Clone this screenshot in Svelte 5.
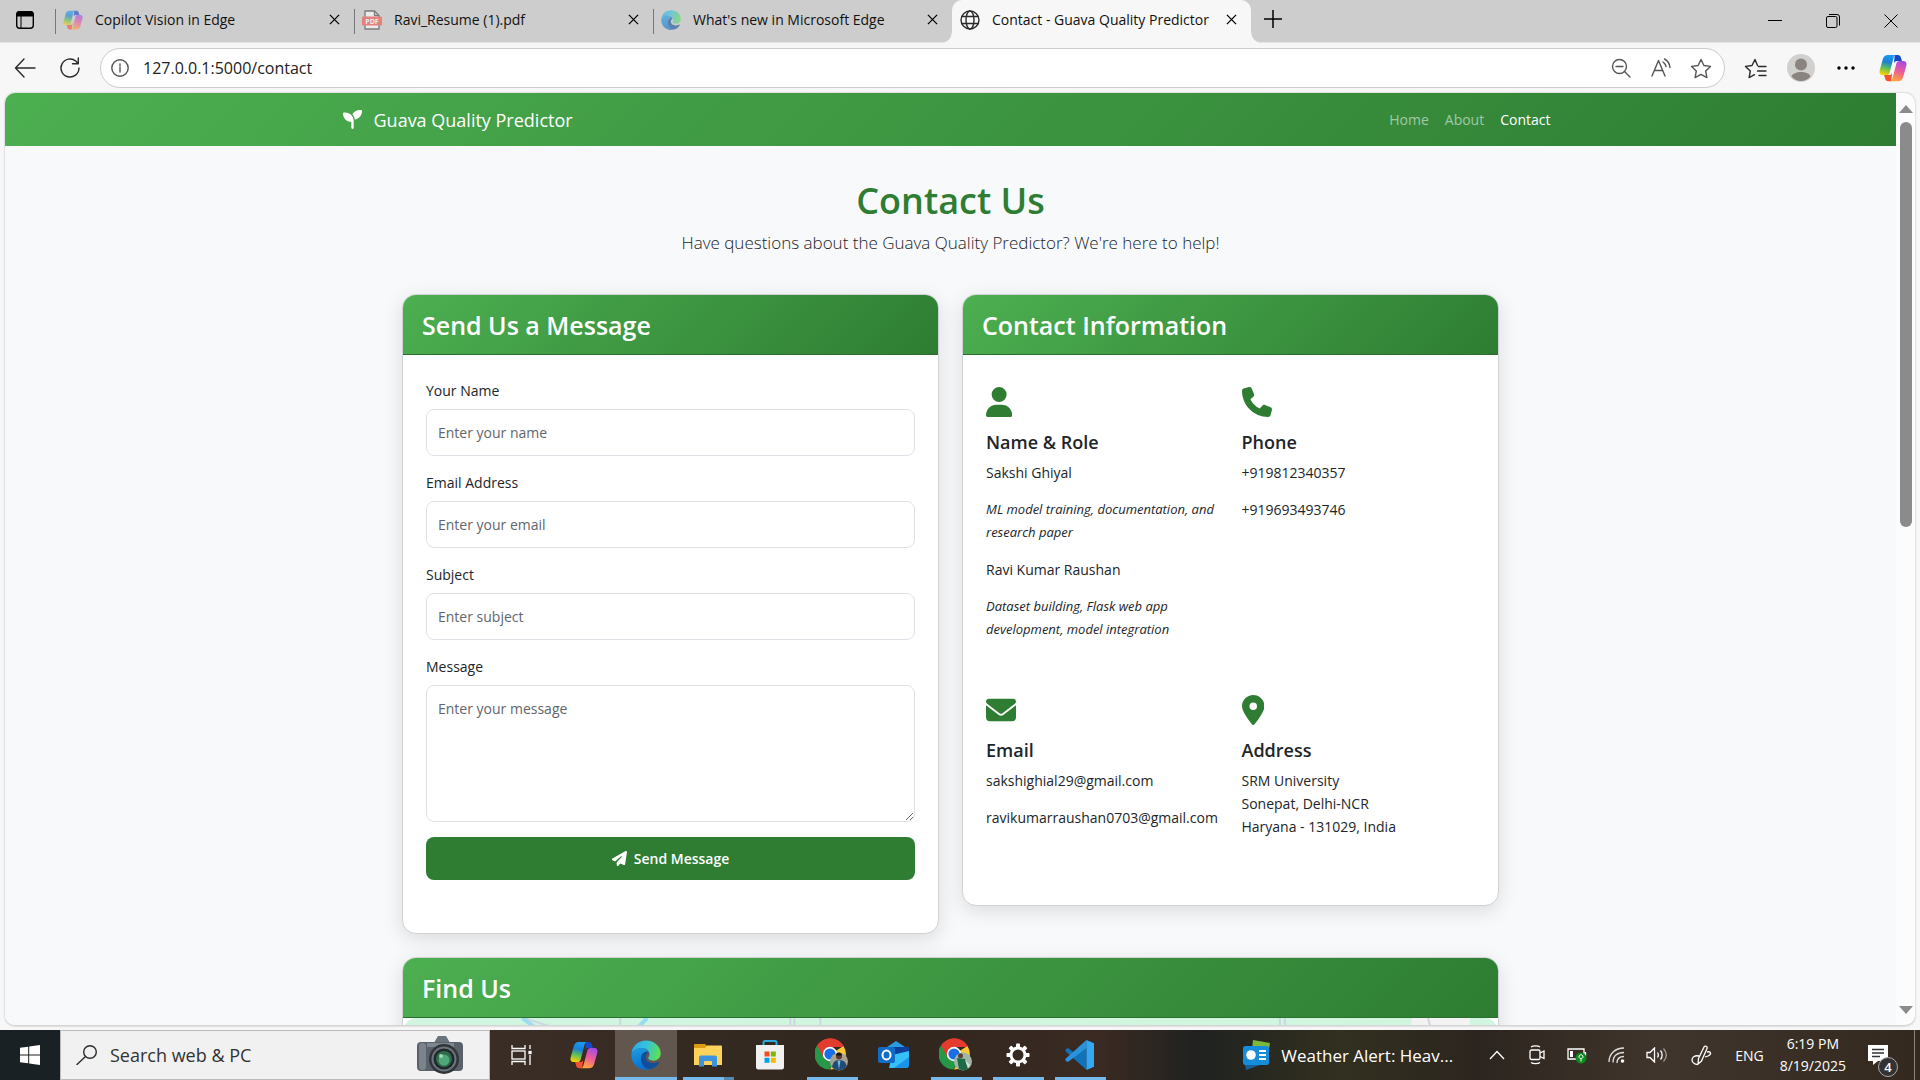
<script>
  const tabs = [
    { title: 'Copilot Vision in Edge', icon: 'copilot', active: false },
    { title: 'Ravi_Resume (1).pdf', icon: 'pdf', active: false },
    { title: "What's new in Microsoft Edge", icon: 'edge', active: false },
    { title: 'Contact - Guava Quality Predictor', icon: 'globe', active: true }
  ];

  const navLinks = [
    { label: 'Home', active: false },
    { label: 'About', active: false },
    { label: 'Contact', active: true }
  ];

  const fields = [
    { id: 'name', label: 'Your Name', placeholder: 'Enter your name', type: 'text' },
    { id: 'email', label: 'Email Address', placeholder: 'Enter your email', type: 'email' },
    { id: 'subject', label: 'Subject', placeholder: 'Enter subject', type: 'text' }
  ];

  const apps = [
    { name: 'Task View', icon: 'taskview', state: '' },
    { name: 'Copilot', icon: 'copilot', state: '' },
    { name: 'Microsoft Edge', icon: 'edge', state: 'current' },
    { name: 'File Explorer', icon: 'folder', state: 'stacked' },
    { name: 'Microsoft Store', icon: 'store', state: '' },
    { name: 'Chrome, profile 1', icon: 'chromeA', state: 'open' },
    { name: 'Outlook', icon: 'outlook', state: '' },
    { name: 'Chrome, profile 2', icon: 'chromeB', state: 'open' },
    { name: 'Settings', icon: 'gear', state: 'open' },
    { name: 'Visual Studio Code', icon: 'code', state: 'open' }
  ];

  const solid = {
    seedling: [512, 'M512 32c0 113.6-84.6 207.5-194.2 222c-7.1-53.4-30.6-101.6-65.3-139.3C290.8 46.3 364 0 448 0h32c17.7 0 32 14.3 32 32zM0 96C0 78.3 14.3 64 32 64H64c123.7 0 224 100.3 224 224v32V480c0 17.7-14.3 32-32 32s-32-14.3-32-32V320C100.3 320 0 219.7 0 96z'],
    user: [448, 'M224 256A128 128 0 1 0 224 0a128 128 0 1 0 0 256zm-45.7 48C79.8 304 0 383.8 0 482.3C0 498.7 13.3 512 29.7 512H418.3c16.4 0 29.7-13.3 29.7-29.7C448 383.8 368.2 304 269.7 304H178.3z'],
    phone: [512, 'M164.9 24.6c-7.7-18.6-28-28.5-47.4-23.2l-88 24C12.1 30.2 0 46 0 64C0 311.4 200.6 512 448 512c18 0 33.8-12.1 38.6-29.5l24-88c5.3-19.4-4.6-39.7-23.2-47.4l-96-40c-16.3-6.8-35.2-2.1-46.3 11.6L304.7 368C234.3 334.7 177.3 277.7 144 207.3L193.3 167c13.7-11.2 18.4-30 11.6-46.3l-40-96z'],
    envelope: [512, 'M48 64C21.5 64 0 85.5 0 112c0 15.1 7.1 29.3 19.2 38.4L236.8 313.6c11.4 8.5 27 8.5 38.4 0L492.8 150.4c12.1-9.1 19.2-23.3 19.2-38.4c0-26.5-21.5-48-48-48H48zM0 176V384c0 35.3 28.7 64 64 64H448c35.3 0 64-28.7 64-64V176L294.4 339.2c-22.8 17.1-54 17.1-76.8 0L0 176z'],
    pin: [384, 'M215.7 499.2C267 435 384 279.4 384 192C384 86 298 0 192 0S0 86 0 192c0 87.4 117 243 168.3 307.2c12.3 15.3 35.1 15.3 47.4 0zM192 128a64 64 0 1 1 0 128 64 64 0 1 1 0-128z'],
    plane: [512, 'M498.1 5.6c10.1 7 15.4 19.1 13.5 31.2l-64 416c-1.5 9.7-7.4 18.2-16 23s-18.9 5.4-28 1.6L284 427.7l-68.5 74.1c-8.9 9.7-22.9 12.9-35.2 8.1S160 493.2 160 480V396.4c0-4 1.5-7.8 4.2-10.7L331.8 202.8c5.8-6.3 5.6-16-.4-22s-15.7-6.4-22-.7L106 360.8 17.7 316.6C7.1 311.3 .3 300.7 0 288.9s5.9-22.8 16.1-28.7l448-256c10.7-6.1 23.9-5.5 34 1.4z']
  };

  const teeth = [0, 45, 90, 135, 180, 225, 270, 315];
</script>

{#snippet glyph(name, size)}
  <svg class="glyph" height={size} viewBox="0 0 {solid[name][0]} 512" aria-hidden="true"><path d={solid[name][1]} /></svg>
{/snippet}

{#snippet copilot(size, id)}
  <svg width={size} height={size} viewBox="0 0 32 32" aria-hidden="true">
    <defs>
      <linearGradient id="{id}-a" x1="0.5" y1="0" x2="0.3" y2="1">
        <stop offset="0" stop-color="#1a9cf0" /><stop offset="0.35" stop-color="#1b7fd6" /><stop offset="0.65" stop-color="#5cc05a" /><stop offset="1" stop-color="#ffd000" />
      </linearGradient>
      <linearGradient id="{id}-b" x1="0.7" y1="0" x2="0.4" y2="1">
        <stop offset="0" stop-color="#a24be8" /><stop offset="0.5" stop-color="#ee5a9a" /><stop offset="1" stop-color="#ffa43c" />
      </linearGradient>
    </defs>
    <path d="M18 1h3.500c2 0 3 1 3.500 3l1.200 4H21c-2.500 0-3.500 1-4 3z" fill="#1748c8" />
    <path d="M14 31h-3.500c-2 0-3-1-3.500-3l-1.200-4H11c2.500 0 3.500-1 4-3z" fill="#f4522e" />
    <path d="M10 1h9.500c-1.500 0-2.300 1.200-2.800 3l-4.500 17c-.6 2-1.700 3-3.700 3H4.200C1.200 24 0 21.500 .8 18.500L4.500 5.500C5.400 2.500 7.200 1 10 1z" fill="url(#{id}-a)" />
    <path d="M22 31h-9.500c1.500 0 2.300-1.200 2.800-3l4.500-17c.6-2 1.700-3 3.700-3h4.300c3 0 4.200 2.500 3.400 5.500l-3.700 13C26.600 29.500 24.800 31 22 31z" fill="url(#{id}-b)" />
  </svg>
{/snippet}

{#snippet edge(size, id)}
  <svg width={size} height={size} viewBox="0 0 32 32" aria-hidden="true">
    <defs>
      <linearGradient id="{id}-t" x1="0" y1="0.3" x2="1" y2="0.5">
        <stop offset="0" stop-color="#2aa9e8" /><stop offset="0.5" stop-color="#35c4d8" /><stop offset="1" stop-color="#5fe04f" />
      </linearGradient>
      <linearGradient id="{id}-l" x1="0.2" y1="0" x2="0.4" y2="1">
        <stop offset="0" stop-color="#1b9de2" /><stop offset="1" stop-color="#0a6fd0" />
      </linearGradient>
    </defs>
    <path d="M.5 14C1.500 6 8 .4 16 .4c9 0 15.700 6.500 15.700 13.600 0 5-3.700 8-8 8-3.700 0-5.400-1.600-5.400-2.700 0-.9 1.400-1.400 1.400-4.100 0-3.500-3.400-6.700-8-6.700C6.500 8.500 2.500 11 .5 14z" fill="url(#{id}-t)" />
    <path d="M.4 16C.6 11.500 5 8.500 10.700 8.500c4 0 7 2 8.200 4.500C15 11.500 11 14.500 11 19.500c0 6 4 11.300 9.500 11.700-1.500.4-3 .6-4.500.6C7 31.800.2 24.700.4 16z" fill="url(#{id}-l)" />
    <path d="M18.900 13c-4.400-1.500-8.300 2-8.300 7 0 6 4.300 11.200 9.900 11.200 4-.9 7-3.200 9.200-6.600.6-.9-.1-1.500-.9-1.100-1.600.8-3.500 1.200-5.400 1.200-5.200 0-7.600-3.200-7.600-6.200 0-2.500 1.400-4.300 3.100-5.500z" fill="#0f4f9e" />
  </svg>
{/snippet}

{#snippet chrome(tone)}
  <svg width="34" height="34" viewBox="0 0 34 34" aria-hidden="true">
    <path d="M15 15L1.600 8.500A15.500 15.500 0 0 1 28.400 7.500L29 9H15z" fill="#e33b2e" />
    <path d="M15 16.500L28.500 8A15.500 15.500 0 0 1 15 31.500l6-12z" fill="#fcc934" />
    <path d="M15 16.500L2 7.500A15.500 15.500 0 0 0 14.500 31.500L20 21z" fill="#279847" />
    <path d="M15 9H28.800A15.500 15.500 0 0 0 2 7.500L8.500 19z" fill="#e33b2e" />
    <circle cx="15" cy="16" r="7.200" fill="#fff" />
    <circle cx="15" cy="16" r="5.600" fill="#1a6fe8" />
    {#if tone === 'a'}
      <circle cx="24" cy="23.500" r="9" fill="#a9a192" />
      <path d="M17 29c1-5 3-7 7-7s7 2 7.500 6a9 9 0 0 1-14.500 1z" fill="#1f4c78" />
      <circle cx="24" cy="18.500" r="3" fill="#5a3a2c" />
      <path d="M21 17.500c0-4 6-4 6 0z" fill="#16110f" />
      <path d="M22.500 22.500l1.500 9 1.500-9z" fill="#7db7dc" />
    {:else}
      <circle cx="24" cy="23.500" r="9" fill="#a3b5a6" />
      <path d="M18 20l8 1 3 10a9 9 0 0 1-9 0z" fill="#1c6a48" />
      <circle cx="21.500" cy="17.800" r="2.500" fill="#5c4036" />
      <path d="M26 22l5 5-2 3z" fill="#d8dedb" />
    {/if}
  </svg>
{/snippet}

{#snippet closeX(size)}
  <svg width={size} height={size} viewBox="0 0 12 12" aria-hidden="true"><path d="M1 1l10 10M11 1L1 11" class="line" stroke-width="1.400" /></svg>
{/snippet}

<div class="desktop">
  <header class="tabstrip">
    <button class="tab-actions" aria-label="Tab actions menu">
      <svg width="20" height="20" viewBox="0 0 20 20" aria-hidden="true">
        <rect x="1.700" y="1.700" width="16.600" height="16.600" rx="3" class="line" stroke-width="1.400" />
        <path d="M1.500 6.500V4a3 3 0 0 1 3-3h11a3 3 0 0 1 3 3v2.500z" fill="#000" /><path d="M6 6v12" class="line" />
      </svg>
    </button>
    {#each tabs as tab}
      <div class="tab" class:active={tab.active}>
        <span class="favicon">
          {#if tab.icon === 'copilot'}
            {@render copilot(20, 'tabcp')}
          {:else if tab.icon === 'edge'}
            {@render edge(20, 'tabed')}
          {:else if tab.icon === 'pdf'}
            <svg width="20" height="20" viewBox="0 0 20 20" aria-hidden="true">
              <path d="M3 1h9.500L17 5.500V19H3z" fill="#fff" stroke="#444" stroke-width="1.300" /><path d="M12.500 1v4.500H17" fill="none" stroke="#444" stroke-width="1.300" />
              <rect x="0" y="6.500" width="20" height="9" rx="1" fill="#f0504a" />
              <text x="10" y="13.500" text-anchor="middle" font-size="7" font-weight="700" fill="#fff">PDF</text>
            </svg>
          {:else}
            <svg width="20" height="20" viewBox="0 0 20 20" aria-hidden="true" class="outline">
              <circle cx="10" cy="10" r="9" /><ellipse cx="10" cy="10" rx="4" ry="9" /><path d="M1.800 6.500h16.400M1.800 13.500h16.400" />
            </svg>
          {/if}
        </span>
        <span class="tab-title">{tab.title}</span>
        <button class="tab-close" aria-label="Close {tab.title}">{@render closeX(11)}</button>
      </div>
    {/each}
    <button class="new-tab" aria-label="New tab">
      <svg width="18" height="18" viewBox="0 0 18 18" aria-hidden="true"><path d="M9 0v18M0 9h18" class="line" stroke-width="1.500" /></svg>
    </button>
    <div class="window-buttons">
      <button aria-label="Minimize"><svg width="14" height="14" viewBox="0 0 14 14" aria-hidden="true"><path d="M0 6.500h14" class="line" /></svg></button>
      <button aria-label="Restore"><svg width="14" height="14" viewBox="0 0 14 14" aria-hidden="true"><rect x=".5" y="2.500" width="10.500" height="11" rx="1.500" class="line" /><path d="M3 .5h8a2.500 2.500 0 0 1 2.500 2.500v8.500" class="line" /></svg></button>
      <button aria-label="Close"><svg width="14" height="14" viewBox="0 0 14 14" aria-hidden="true"><path d="M.5 .5l13 13M13.500 .5l-13 13" class="line" /></svg></button>
    </div>
  </header>

  <div class="toolbar">
    <button class="tool" aria-label="Back"><svg width="22" height="20" viewBox="0 0 22 20" class="outline" aria-hidden="true"><path d="M21 10H1.500M10 1L1.500 10l8.500 9" /></svg></button>
    <button class="tool" aria-label="Refresh"><svg width="22" height="22" viewBox="0 0 22 22" class="outline" aria-hidden="true"><path d="M20 11a9 9 0 1 1-3-6.700L19 6.500M19.300 1v5.700h-5.800" /></svg></button>
    <div class="address">
      <svg width="18" height="18" viewBox="0 0 18 18" class="outline" aria-hidden="true"><circle cx="9" cy="9" r="8.200" /><path d="M9 8v5M9 5v1.500" /></svg>
      <input aria-label="Address bar" type="text" value="127.0.0.1:5000/contact" />
      <button aria-label="Zoom out"><svg width="20" height="20" viewBox="0 0 20 20" class="outline" aria-hidden="true"><circle cx="8.500" cy="8.500" r="7" /><path d="M13.500 13.500l5.500 5.500M5 8.500h7" /></svg></button>
      <button aria-label="Read aloud"><svg width="21" height="20" viewBox="0 0 21 20" class="outline" aria-hidden="true"><path d="M1 18L7.500 2.500 14 18M3.500 12.500h8M12 4c1.500 1 2.500 2.500 3 4.500M13.500 1c3 1.500 5 4.500 5.500 8.500" /></svg></button>
      <button aria-label="Add to favorites"><svg width="22" height="21" viewBox="0 0 22 21" class="outline" aria-hidden="true"><path d="M11 1.500l2.900 6 6.600.9-4.800 4.600 1.200 6.600L11 16.400l-5.900 3.200 1.200-6.600L1.500 8.400l6.600-.9z" /></svg></button>
    </div>
    <button class="tool" aria-label="Favorites"><svg width="23" height="21" viewBox="0 0 23 21" class="outline" aria-hidden="true"><path d="M13.500 7.500L11 1.500 8 7.500l-6.500.9 4.800 4.600-1.200 6.600 5.400-2.900M14.500 8.500H22M13.500 13H22M15 17.500h7" /></svg></button>
    <button class="tool" aria-label="Profile"><svg width="28" height="28" viewBox="0 0 28 28" aria-hidden="true"><circle cx="14" cy="14" r="14" fill="#d2d0ce" /><circle cx="14" cy="10.500" r="6" fill="#8a8380" /><path d="M4.500 22.500c1-3 5-4.500 9.500-4.500s8.500 1.500 9.500 4.500A12.500 12.500 0 0 1 14 27c-4 0-7.500-2-9.500-4.500z" fill="#8a8380" /></svg></button>
    <button class="tool" aria-label="Settings and more"><svg width="18" height="4" viewBox="0 0 18 4" aria-hidden="true"><circle cx="2" cy="2" r="1.700" /><circle cx="9" cy="2" r="1.700" /><circle cx="16" cy="2" r="1.700" /></svg></button>
    <button class="tool last" aria-label="Copilot">{@render copilot(28, 'barcp')}</button>
  </div>

  <div class="frame">
    <div class="viewport">
      <div class="page">
        <nav class="navbar">
          <div class="container">
            <a class="brand" href="#home">{@render glyph('seedling', 19)}Guava Quality Predictor</a>
            <div class="nav-links">
              {#each navLinks as link}
                <a href="#{link.label.toLowerCase()}" class:active={link.active}>{link.label}</a>
              {/each}
            </div>
          </div>
        </nav>

        <main>
          <h1>Contact Us</h1>
          <p class="lead">Have questions about the Guava Quality Predictor? We're here to help!</p>

          <div class="columns">
            <section class="card">
              <h2>Send Us a Message</h2>
              <form class="card-body">
                {#each fields as field}
                  <label for={field.id}>{field.label}</label>
                  <input id={field.id} type={field.type} placeholder={field.placeholder} />
                {/each}
                <label for="message">Message</label>
                <textarea id="message" placeholder="Enter your message"></textarea>
                <button class="send" type="button">{@render glyph('plane', 15)}Send Message</button>
              </form>
            </section>

            <section class="card">
              <h2>Contact Information</h2>
              <div class="card-body info">
                <div class="item">
                  {@render glyph('user', 30)}
                  <h3>Name &amp; Role</h3>
                  <p>Sakshi Ghiyal</p>
                  <p class="role">ML model training, documentation, and research paper</p>
                  <p>Ravi Kumar Raushan</p>
                  <p class="role">Dataset building, Flask web app development, model integration</p>
                </div>
                <div class="item">
                  {@render glyph('phone', 30)}
                  <h3>Phone</h3>
                  <p>+919812340357</p>
                  <p>+919693493746</p>
                </div>
                <div class="item">
                  {@render glyph('envelope', 30)}
                  <h3>Email</h3>
                  <p>sakshighial29@gmail.com</p>
                  <p>ravikumarraushan0703@gmail.com</p>
                </div>
                <div class="item">
                  {@render glyph('pin', 30)}
                  <h3>Address</h3>
                  <p>SRM University<br />Sonepat, Delhi-NCR<br />Haryana - 131029, India</p>
                </div>
              </div>
            </section>
          </div>

          <section class="card">
            <h2>Find Us</h2>
            <svg class="map" viewBox="0 0 1094 375" preserveAspectRatio="xMidYMin slice" role="img" aria-label="Map">
              <rect width="1094" height="375" fill="#d1f6e0" />
              <path d="M1008 0h58v375h-90z" fill="#f3f3f3" />
              <g fill="none" stroke="#cdd6e0" stroke-width="2">
                <path d="M217 0v375M387 0v375M391 0v375M417 0v375M876 0l8 375M881 0l8 375M1024 0l40 140M121 0l34 11 60 40" />
              </g>
              <g fill="none" stroke="#9bdcf2" stroke-width="4"><path d="M119 0l22 16 40 60M244 0l-22 22-60 90" /></g>
            </svg>
          </section>
        </main>
      </div>
      <div class="scrollbar" aria-hidden="true">
        <svg width="14" height="8" viewBox="0 0 14 8"><path d="M7 0l7 8H0z" /></svg>
        <div class="thumb"></div>
        <svg width="14" height="8" viewBox="0 0 14 8"><path d="M0 0h14L7 8z" /></svg>
      </div>
    </div>
  </div>

  <footer class="taskbar">
    <button class="start" aria-label="Start"><svg width="20" height="20" viewBox="0 0 20 20" aria-hidden="true"><path d="M0 2.800L8.200 1.700v7.800H0zM9.200 1.500L20 0v9.500H9.200zM0 10.500h8.200v7.800L0 17.200zM9.200 10.500H20V20L9.200 18.500z" fill="#fff" /></svg></button>
    <div class="search">
      <svg width="22" height="20" viewBox="0 0 22 20" class="outline" aria-hidden="true"><circle cx="14" cy="7" r="6.300" /><path d="M9.500 11.500L1 19.500" /></svg>
      <input type="text" aria-label="Search web and PC" placeholder="Search web &amp; PC" />
      <svg width="46" height="40" viewBox="0 0 46 40" aria-hidden="true">
        <path d="M18 6l3-5h8l3 5 2 5H16z" fill="#6b737b" /><rect x="0" y="7" width="46" height="29" rx="4" fill="#59616a" />
        <rect x="2" y="8" width="7" height="27" rx="3" fill="#7b838b" /><path d="M10 8h27v4H10z" fill="#7e868d" />
        <circle cx="27" cy="24" r="15" fill="#30353a" /><circle cx="27" cy="24" r="12.500" fill="#6d757c" /><circle cx="27" cy="24" r="10.500" fill="#23282c" />
        <circle cx="27" cy="24" r="8" fill="#2e6b4b" /><circle cx="27" cy="25" r="5.500" fill="#4fa878" /><circle cx="24" cy="21" r="2" fill="#9bd8b6" />
      </svg>
    </div>
    <div class="apps">
      {#each apps as app}
        <button class="app {app.state}" aria-label={app.name}>
          {#if app.icon === 'taskview'}
            <svg width="22" height="20" viewBox="0 0 22 20" class="light" aria-hidden="true"><path d="M1 0v3.500h13V0M1 20v-3.500h13V20M19 0v4M19 10v10" /><rect x="1" y="6" width="13" height="8" /><rect x="18" y="6.500" width="2" height="2" fill="#fff" /></svg>
          {:else if app.icon === 'copilot'}
            {@render copilot(28, 'taskcp')}
          {:else if app.icon === 'edge'}
            {@render edge(30, 'tasked')}
          {:else if app.icon === 'folder'}
            <svg width="28" height="24" viewBox="0 0 28 24" aria-hidden="true"><path d="M0 2a1 1 0 0 1 1-1h10l3 3v4H0z" fill="#dd9b13" /><path d="M0 5h11l2-2.500h14a1 1 0 0 1 1 1V22H0z" fill="#ffd25a" /><path d="M5 23.500V14.500a2 2 0 0 1 2-2h14a2 2 0 0 1 2 2v9h-5v-4.500a1 1 0 0 0-1-1h-6a1 1 0 0 0-1 1v4.500z" fill="#3a93dc" /></svg>
          {:else if app.icon === 'store'}
            <svg width="30" height="30" viewBox="0 0 30 30" aria-hidden="true"><path d="M8.500 8V2.500a1.500 1.500 0 0 1 1.500-1.500h10a1.500 1.500 0 0 1 1.500 1.500V8" fill="none" stroke="#2fa8e0" stroke-width="2" /><path d="M1 5h28v22a2.500 2.500 0 0 1-2.500 2.500h-23A2.500 2.500 0 0 1 1 27z" fill="#f1f1f1" /><path d="M9.500 11.500h5v5h-5z" fill="#f04e22" /><path d="M15.800 11.500h5v5h-5z" fill="#7db700" /><path d="M9.500 17.800h5v5h-5z" fill="#00a2ea" /><path d="M15.800 17.800h5v5h-5z" fill="#fbb700" /></svg>
          {:else if app.icon === 'chromeA'}
            {@render chrome('a')}
          {:else if app.icon === 'chromeB'}
            {@render chrome('b')}
          {:else if app.icon === 'outlook'}
            <svg width="32" height="28" viewBox="0 0 32 28" aria-hidden="true"><path d="M6 8L18 0l12 8v3L6 14z" fill="#2a9be0" /><path d="M14 6h17v10L14 22z" fill="#0f3f9a" /><path d="M14 14l17-4v13a4 4 0 0 1-4 4H11z" fill="#35c1f5" /><path d="M16 27l15-11v8a3 3 0 0 1-3 3z" fill="#1b93ea" /><rect x="0" y="6" width="17" height="16" rx="2" fill="#0f6cc8" /><ellipse cx="8.500" cy="14" rx="4" ry="4.500" fill="none" stroke="#fff" stroke-width="2" /></svg>
          {:else if app.icon === 'gear'}
            <svg width="24" height="24" viewBox="-12 -12 24 24" aria-hidden="true"><circle r="7" fill="none" stroke="#fff" stroke-width="3" />{#each teeth as turn}<rect x="-2" y="-11.500" width="4" height="4.500" rx=".8" fill="#fff" transform="rotate({turn})" />{/each}</svg>
          {:else}
            <svg width="30" height="30" viewBox="0 0 30 30" aria-hidden="true"><path d="M21.500 0L8.500 12.200 3 8 .5 9.300v1.900L21.500 30z" fill="#1272b8" /><path d="M21.500 0v8L3 22 .5 20.700v-2z" fill="#2a93dc" /><path d="M21.500 0L29 3.200v23.600L21.500 30z" fill="#35a8f2" /></svg>
          {/if}
        </button>
      {/each}
    </div>
    <button class="weather">
      <svg width="30" height="30" viewBox="0 0 30 30" aria-hidden="true"><path d="M11 0l17 3-3 18-16-2z" fill="#7cb83c" /><path d="M2 20l16 5-14 5z" fill="#1b5f98" /><rect x="1" y="6" width="26" height="19" rx="2.500" fill="#158ddb" /><circle cx="9" cy="15" r="4.800" fill="#fff" /><path d="M17 11h7M17 15h7M17 19h7" stroke="#fff" stroke-width="1.800" /></svg>
      Weather Alert: Heav...
    </button>
    <div class="tray">
      <button aria-label="Show hidden icons"><svg width="16" height="10" viewBox="0 0 16 10" class="light" aria-hidden="true"><path d="M1 9l7-7.500L15 9" /></svg></button>
      <button aria-label="Meet now"><svg width="16" height="20" viewBox="0 0 16 20" class="light" aria-hidden="true"><rect x="1" y="5" width="10" height="9.500" rx="1.500" /><path d="M11 8l4-2v7.500l-4-2M2 2c2-1.500 7-1.500 9 0M2 17.500c2 1.500 7 1.500 9 0" /></svg></button>
      <button aria-label="Battery"><svg width="20" height="18" viewBox="0 0 20 18" class="light" aria-hidden="true"><path d="M1 3h16v10H1zM18.500 6v4" /><path d="M3 5h3v6H3z" fill="#fff" stroke="none" /><circle cx="14" cy="12" r="5.500" fill="#0b8a1f" stroke="none" /><path d="M14 15.500v-3M12 11c0-3 4-3 4 0 0 2-4 2-4 0z" stroke-width="1" /></svg></button>
      <button aria-label="Network"><svg width="18" height="18" viewBox="0 0 18 18" class="light" aria-hidden="true"><path d="M1 16C1 8 7 2 16 2M5 16.500C5 10 9 6.500 16 6.500M9 17c0-4 2.500-6.500 7-6.500" opacity=".85" /><circle cx="14.500" cy="15" r="1.800" fill="#fff" stroke="none" /></svg></button>
      <button aria-label="Volume"><svg width="22" height="16" viewBox="0 0 22 16" class="light" aria-hidden="true"><path d="M1 5.500h3L8.500 1v14L4 10.500H1zM11.500 5.500c1 1.500 1 3.500 0 5M14.500 3.500c2.200 2.500 2.200 6.500 0 9" /><path d="M17.500 1.500c3.500 4 3.500 9 0 13" opacity=".5" /></svg></button>
      <button class="pen" aria-label="Pen menu"><svg width="22" height="22" viewBox="0 0 22 22" class="light" aria-hidden="true"><path d="M8.500 14.500L14 3c1-2 4-.5 3 1.500L11.500 17 8 20zM17 8c4-1 5 2 1 4l-3 1M9 12c-4-1-7 1-7 4s4 5 6 4" /></svg></button>
      <span class="lang">ENG</span>
      <span class="clock">6:19 PM<br />8/19/2025</span>
      <button class="notify" aria-label="Notifications, 4 new">
        <svg width="20" height="20" viewBox="0 0 20 20" aria-hidden="true"><path d="M0 0h20v16H10l-5 4v-4H0z" fill="#fff" /><path d="M4 4.500h12M4 8h12M4 11.500h8" stroke="#333" stroke-width="1.300" /></svg>
        <span class="badge">4</span>
      </button>
    </div>
    <button class="peek" aria-label="Show desktop"></button>
  </footer>
</div>

<style>
  :global(body) { margin: 0; overflow: hidden; }
  .desktop { height: 100vh; display: flex; flex-direction: column; background: #f7f7f7; font-family: "Open Sans", "Noto Sans", sans-serif; font-size: 14px; color: #212529; }
  *, *::before, *::after { box-sizing: border-box; }
  button { font: inherit; color: inherit; background: none; border: 0; padding: 0; display: flex; align-items: center; justify-content: center; }
  input, textarea { font: inherit; color: inherit; }
  a { text-decoration: none; }
  svg { display: block; flex: none; }
  .line { fill: none; stroke: #000; }
  .outline { fill: none; stroke: #2b2b2b; stroke-width: 1.4; stroke-linecap: round; stroke-linejoin: round; }
  .light { fill: none; stroke: #fff; stroke-width: 1.3; }
  .glyph { fill: currentColor; }

  .tabstrip { flex: none; height: 43px; display: flex; background: #cdcdcd; border-bottom: 1px solid #e4e4e4; color: #111; }
  .tab-actions { width: 55px; flex: none; padding-right: 5px; padding-bottom: 3px; }
  .tab { flex: 0 1 299px; min-width: 0; height: 42px; display: flex; align-items: center; padding: 0 13px 3px 8px; position: relative; }
  .tab:not(.active)::before { content: ""; position: absolute; left: 0; top: 9px; height: 25px; width: 1px; background: #777; }
  .tab.active { height: 43px; padding-bottom: 4px; background: #f7f7f7; border-radius: 10px 10px 0 0; }
  .tab.active::before, .tab.active::after { content: ""; position: absolute; bottom: 0; width: 10px; height: 10px; }
  .tab.active::before { left: -10px; background: radial-gradient(circle at 0 0, #cdcdcd 9px, #f7f7f7 10px); }
  .tab.active::after { right: -10px; background: radial-gradient(circle at 100% 0, #cdcdcd 9px, #f7f7f7 10px); }
  .favicon { opacity: 0.6; margin-right: 12px; }
  .active .favicon { opacity: 1; }
  .tab-title { flex: 1; min-width: 0; white-space: nowrap; overflow: hidden; line-height: 20px; }
  .tab-close { width: 14px; height: 20px; }
  .new-tab { width: 44px; padding-bottom: 4px; }
  .window-buttons { margin-left: auto; display: flex; }
  .window-buttons button { width: 58px; }

  .toolbar { flex: none; height: 50px; display: flex; align-items: center; padding: 0 2px; }
  .tool { width: 45px; height: 40px; flex: none; }
  .tool.last { width: 50px; }
  .address { flex: 1; min-width: 0; height: 40px; margin: 0 8px; padding: 0 3px 0 10px; display: flex; align-items: center; background: #fff; border: 1px solid #ccc; border-radius: 20px; }
  .address input { flex: 1; min-width: 0; border: 0; outline: 0; background: none; padding: 0 14px; font-size: 16px; color: #222; }
  .address button { width: 40px; height: 34px; }
  .address .outline { stroke: #555; }

  .frame { flex: 1; min-height: 0; padding: 0 5px 4px; }
  .viewport { height: 100%; display: flex; overflow: hidden; border-radius: 10px; border-bottom: 1px solid #d4d4d4; box-shadow: 0 0 2px #aaa; background: #fcfcfc; }
  .page { flex: 1; min-width: 0; overflow: hidden; background: #f8f9fb; }
  .scrollbar { width: 19px; flex: none; display: flex; flex-direction: column; align-items: center; padding: 12px 0 11px; fill: #8b8b8b; }
  .thumb { width: 12px; height: 405px; margin: 9px 0 auto; border-radius: 6px; background: #8b8b8b; }

  .navbar { background: linear-gradient(135deg, #4caf50, #2e7d32); height: 53px; }
  .container { max-width: 1238px; height: 100%; margin: 0 auto; padding: 0 11px; display: flex; align-items: center; justify-content: space-between; }
  .brand { display: flex; align-items: center; gap: 12px; color: #fff; font-size: 18px; }
  .nav-links { display: flex; gap: 16px; padding-right: 8px; }
  .nav-links a { color: #ffffff8c; }
  .nav-links a.active { color: #fff; }

  main { max-width: 1097px; margin: 0 auto; padding-top: 32px; }
  h1, h2, h3, p { margin: 0; }
  h1 { color: #2e7d32; font-size: 36px; line-height: 46px; font-weight: 600; text-align: center; }
  .lead { font-size: 17px; font-weight: 300; line-height: 28px; margin: 5px 0 37px; text-align: center; }
  .columns { display: grid; grid-template-columns: 1fr 1fr; gap: 23px; align-items: start; margin-bottom: 23px; }
  .card { background: #fff; border: 1px solid #d0d2d4; border-radius: 14px; overflow: hidden; box-shadow: 0 5px 20px #0000001f; }
  h2 { height: 60px; padding: 0 19px; background: linear-gradient(135deg, #4caf50, #2e7d32); border-bottom: 1px solid #2b6f2f; color: #fff; font-size: 25px; line-height: 60px; font-weight: 600; }
  .card-body { padding: 24px 23px 53px; }
  label { display: block; line-height: 23px; margin-bottom: 7px; }
  .card-body input, textarea { display: block; width: 100%; height: 47px; margin-bottom: 15px; padding: 11px; border: 1px solid #dee2e6; border-radius: 8px; background: #fff; line-height: 23px; }
  textarea { height: 137px; resize: vertical; }
  .card-body ::placeholder { color: #5f666d; opacity: 1; }
  .send { width: 100%; height: 43px; gap: 7px; background: #2e7d32; color: #fff; border-radius: 8px; font-weight: 600; }
  .info { display: grid; grid-template-columns: 1fr 1fr; gap: 32px 22px; }
  .item { min-width: 0; padding-top: 8px; }
  .item .glyph { color: #2e7d32; margin-bottom: 14px; }
  h3 { font-size: 18px; line-height: 22px; font-weight: 600; margin-bottom: 8px; }
  .item p { line-height: 23px; margin-bottom: 14px; }
  .item .role { font-size: 13px; font-style: italic; }
  .map { width: 100%; height: 375px; border-radius: 14px; }

  .taskbar { flex: none; height: 50px; display: flex; align-items: stretch; background: linear-gradient(90deg, #1a2124 0, #1a2124 60px, #3a2d25 490px, #30271f 900px, #3a2a22 1100px, #1f2220 1200px, #32301f 1340px, #2c251f 1480px, #40352c 1660px, #33291f); color: #fff; }
  .start { width: 60px; }
  .search { flex: 0 1 430px; min-width: 0; display: flex; align-items: center; padding: 0 26px 0 15px; background: #f1f1f1; border: 1px solid #bbb; }
  .search input { flex: 1; min-width: 0; border: 0; outline: 0; background: none; padding: 0 12px; font-size: 18px; }
  .search ::placeholder { color: #333; opacity: 1; }
  .apps { display: flex; padding-left: 1px; }
  .app { width: 62px; position: relative; }
  .app.current { background: #62574f; }
  .app.current::after, .app.open::after, .app.stacked::after { content: ""; position: absolute; left: 6px; right: 5px; bottom: 0; height: 3px; background: #76b9ed; }
  .app.current::after { left: 0; right: 0; }
  .app.stacked::after { background: linear-gradient(90deg, #76b9ed 80%, #5687ad 80%); }
  .weather { margin-left: auto; gap: 9px; font-size: 17px; white-space: nowrap; }
  .tray { display: flex; align-items: center; margin-left: 24px; }
  .tray button { width: 40px; height: 40px; }
  .tray .pen { margin-left: 4px; }
  .lang { margin: 0 16px 0 14px; }
  .clock { text-align: center; line-height: 22px; }
  .tray .notify { position: relative; margin: 0 16px 0 12px; }
  .badge { position: absolute; right: 0; bottom: -2px; width: 20px; height: 20px; border: 1px solid #aaa; border-radius: 50%; background: #333; font-size: 13px; line-height: 18px; text-align: center; font-weight: 600; }
  .peek { width: 6px; flex: none; border-left: 1px solid #8a827b; }
</style>
